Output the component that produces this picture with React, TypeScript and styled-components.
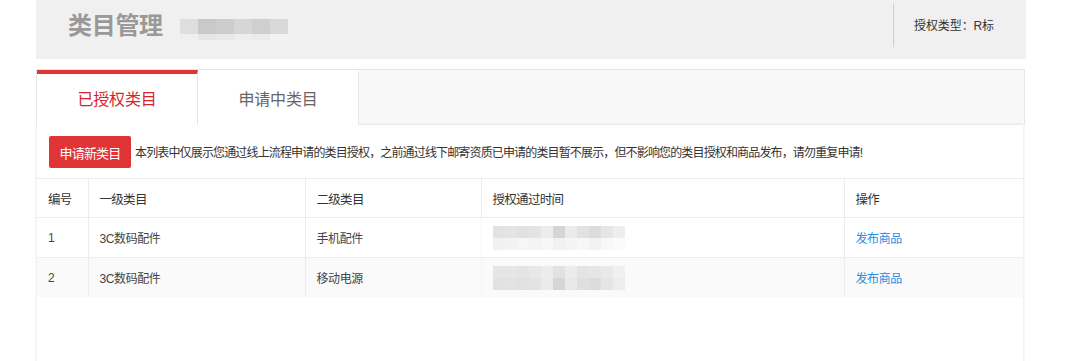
import React from "react";
import styled, { createGlobalStyle } from "styled-components";

const GlobalStyle = createGlobalStyle`
  body {
    margin: 0;
    background: #fff;
    font-family: "Liberation Sans", "Noto Sans CJK SC", sans-serif;
    color: #333;
  }
`;

type Row = { id: number; first: string; second: string };

const rows: Row[] = [
  { id: 1, first: "3C数码配件", second: "手机配件" },
  { id: 2, first: "3C数码配件", second: "移动电源" },
];

// greys for the pixelated (blurred out) bits of the screenshot
const titleMosaic = [
  ["#dedede", "#c9c9c9", "#cdcdcd", "#d6d6d6", "#cfcfcf", "#d9d9d9"],
  ["#efefef", "#e6e6e6", "#e9e9e9", "#eeeeee", "#ebebeb", "#f2f2f2"],
];

const timeMosaic = [
  [
    ["#e2e2e2", "#e4e4e4", "#e1e1e1", "#e4e4e4", "#ececec", "#d5d5d5", "#ebebeb", "#e2e2e2", "#dcdcdc", "#e6e6e6", "#eeeeee"],
    ["#f1f1f1", "#f3f3f3", "#f6f6f6", "#f4f4f4", "#f7f7f7", "#f1f1f1", "#f4f4f4", "#f7f7f7", "#f2f2f2", "#f8f8f8", "#fbfbfb"],
  ],
  [
    ["#e6e6e6", "#e6e6e6", "#e4e4e4", "#e8e8e8", "#ececec", "#e2e2e2", "#ececec", "#e4e4e4", "#e6e6e6", "#e9e9e9", "#f0f0f0"],
    ["#e2e2e2", "#e3e3e3", "#e1e1e1", "#e3e3e3", "#ebebeb", "#d6d6d6", "#e9e9e9", "#dfdfdf", "#dcdcdc", "#e5e5e5", "#ededed"],
  ],
];

const Mosaic = ({ cells, cellW, cellH }: { cells: string[][]; cellW: number; cellH: number[] }) => (
  <MosaicGrid>
    {cells.map((line, r) => (
      <MosaicLine key={r}>
        {line.map((c, i) => (
          <Cell key={i} style={{ background: c, width: cellW, height: cellH[r] }} />
        ))}
      </MosaicLine>
    ))}
  </MosaicGrid>
);

const App = () => {
  return (
    <>
      <GlobalStyle />
      <Page>
        <Header>
          <Title>类目管理</Title>
          <Mosaic cells={titleMosaic} cellW={18} cellH={[15, 6]} />
          <AuthType>授权类型：R标</AuthType>
        </Header>

        <Panel>
          <TabBar>
            <Tab $active>已授权类目</Tab>
            <Tab>申请中类目</Tab>
          </TabBar>

          <Content>
            <Toolbar>
              <ApplyButton>申请新类目</ApplyButton>
              <Notice>
                本列表中仅展示您通过线上流程申请的类目授权，之前通过线下邮寄资质已申请的类目暂不展示，但不影响您的类目授权和商品发布，请勿重复申请!
              </Notice>
            </Toolbar>

            <Table>
              <colgroup>
                <col style={{ width: 51 }} />
                <col style={{ width: 217 }} />
                <col style={{ width: 176 }} />
                <col style={{ width: 363 }} />
                <col />
              </colgroup>
              <thead>
                <tr>
                  <Th>编号</Th>
                  <Th>一级类目</Th>
                  <Th>二级类目</Th>
                  <Th>授权通过时间</Th>
                  <Th>操作</Th>
                </tr>
              </thead>
              <tbody>
                {rows.map((row, i) => (
                  <Tr key={row.id} $striped={i % 2 === 1}>
                    <Td>{row.id}</Td>
                    <Td>{row.first}</Td>
                    <Td>{row.second}</Td>
                    <TimeCell>
                      <Mosaic cells={timeMosaic[i]} cellW={12} cellH={[12, 12]} />
                    </TimeCell>
                    <Td>
                      <Link href="#">发布商品</Link>
                    </Td>
                  </Tr>
                ))}
              </tbody>
            </Table>
          </Content>
        </Panel>
      </Page>
    </>
  );
};
export default App;

const Page = styled.div`
  width: 990px;
  padding-left: 36px;
`;

const Header = styled.div`
  height: 59px;
  background: #f0f0f0;
  display: flex;
  align-items: center;
  padding-left: 32px;
`;

const Title = styled.h1`
  margin: 0 17px 0 0;
  font-size: 24px;
  font-weight: 700;
  color: #999;
  letter-spacing: -0.3px;
  position: relative;
  top: -6px;
`;

const MosaicGrid = styled.div`
  display: flex;
  flex-direction: column;
  filter: blur(0.6px);
`;

const MosaicLine = styled.div`
  display: flex;
`;

const Cell = styled.span`
  display: block;
`;

const AuthType = styled.div`
  margin-left: auto;
  margin-top: -10px;
  height: 44px;
  border-left: 1px solid #cfcfcf;
  padding: 0 32px 0 20px;
  display: flex;
  align-items: center;
  font-size: 12px;
  letter-spacing: -0.1px;
  color: #333;
`;

const Panel = styled.div`
  margin-top: 10px;
`;

const TabBar = styled.div`
  display: flex;
  height: 55px;
  background: #f8f8f8;
  border: 1px solid #e6e6e6;
  border-bottom: none;
  margin-right: 1px;
`;

const Tab = styled.div<{ $active?: boolean }>`
  width: 160px;
  background: #fff;
  border-right: 1px solid #e6e6e6;
  border-top: 4px solid ${(p) => (p.$active ? "#e03535" : "transparent")};
  display: flex;
  align-items: center;
  justify-content: center;
  padding-bottom: 4px;
  font-size: 16px;
  letter-spacing: -0.2px;
  color: ${(p) => (p.$active ? "#d4252b" : "#666")};
  cursor: pointer;
`;

const Content = styled.div`
  margin: 0 3px 0 1px;
  min-height: 240px;
  background: #fff;
  box-shadow: 0 0 3px rgba(0, 0, 0, 0.14);
`;

const Toolbar = styled.div`
  display: flex;
  align-items: center;
  padding: 11px 12px 10px;
`;

const ApplyButton = styled.button`
  width: 82px;
  height: 32px;
  padding: 0;
  border: none;
  border-radius: 2px;
  background: #e03436;
  color: #fff;
  font-family: inherit;
  font-size: 13px;
  letter-spacing: -0.8px;
  cursor: pointer;
`;

const Notice = styled.span`
  margin-left: 4px;
  font-size: 12px;
  letter-spacing: -0.85px;
  color: #333;
  white-space: nowrap;
  position: relative;
  top: -1px;
`;

const Table = styled.table`
  width: 100%;
  border-collapse: collapse;
  table-layout: fixed;
  font-size: 12px;
`;

const Th = styled.th`
  height: 38px;
  padding: 0 0 0 11px;
  text-align: left;
  font-weight: 400;
  font-size: 12.5px;
  color: #333;
  letter-spacing: -0.7px;
  border-top: 1px solid #ececec;
  border-bottom: 1px solid #ececec;
  border-left: 1px solid #ececec;

  &:first-child {
    border-left: none;
  }
`;

const Tr = styled.tr<{ $striped?: boolean }>`
  background: ${(p) => (p.$striped ? "#fafafa" : "#fff")};
`;

const Td = styled.td`
  height: 39px;
  padding: 0 0 0 11px;
  color: #444;
  letter-spacing: -0.4px;
  border-bottom: 1px solid #ececec;
  border-left: 1px solid #ececec;

  &:first-child {
    border-left: none;
  }

  tr:last-child > & {
    border-bottom: none;
  }
`;

const TimeCell = styled(Td)`
  border-left-color: #f6f6f6;
`;

const Link = styled.a`
  color: #2b8be0;
  text-decoration: none;
`;
